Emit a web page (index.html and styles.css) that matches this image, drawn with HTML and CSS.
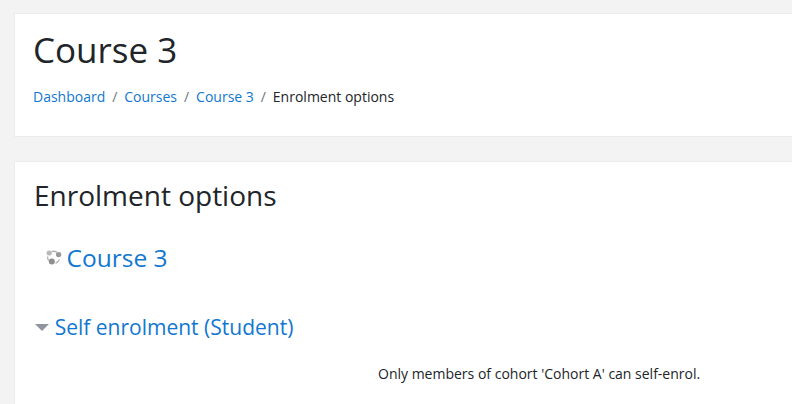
FILE: index.html
```html
<!DOCTYPE html>
<html lang="en">

<head>
    <meta charset="utf-8" />
    <title>Course 3: Enrolment options</title>
    <link rel="stylesheet" href="styles.css">
</head>

<body>
    <header class="card page-header">
        <h1>Course 3</h1>
        <nav class="breadcrumb">
            <a href="#">Dashboard</a><span class="sep">/</span>
            <a href="#">Courses</a><span class="sep">/</span>
            <a href="#">Course 3</a><span class="sep">/</span>
            <span>Enrolment options</span>
        </nav>
    </header>
    <main class="card main-card">
        <h2>Enrolment options</h2>
        <div class="course-name">
            <svg class="course-icon" width="16" height="16" viewBox="0 0 16 16">
                <path d="M5.5 1.6 A7 7 0 0 1 11 2.2 M1.6 6.5 A7 7 0 0 0 2.6 10.6 M9.6 13.4 A7 7 0 0 0 13.4 9.5" fill="none" stroke="#b0b0b0" stroke-width="1.3" />
                <circle cx="3.2" cy="3" r="2.6" fill="#b8b8b8" />
                <circle cx="12.6" cy="4.6" r="2.7" fill="#999" />
                <circle cx="5.8" cy="11.6" r="3" fill="#8e8e8e" />
            </svg>
            <a href="#">Course 3</a>
        </div>
        <div class="enrol-head">
            <span class="caret"></span>
            <a href="#">Self enrolment (Student)</a>
        </div>
        <p class="enrol-note">Only members of cohort 'Cohort A' can self-enrol.</p>
    </main>
</body>

</html>
```

FILE: styles.css
```css
body {
    margin: 0;
    height: 404px;
    padding: 13px 0 0 14px;
    background: #f3f3f3;
    font-family: "Open Sans", sans-serif;
    font-size: 14px;
    color: #212529;
    overflow: hidden;
    box-sizing: border-box;
}

a {
    color: #1177d1;
    text-decoration: none;
}

.card {
    background: #fff;
    border: 1px solid #ececec;
    border-right: 0;
}

.page-header {
    height: 124px;
    box-sizing: border-box;
    padding: 15px 18px 0;
}

h1 {
    margin: 0;
    font-size: 35px;
    font-weight: 400;
    line-height: 42px;
}

.breadcrumb {
    display: flex;
    margin-top: 16px;
    line-height: 20px;
}

.sep {
    color: #6c757d;
    margin: 0 7px 0 6.9px;
}

.main-card {
    margin-top: 24px;
    height: 243px;
    box-sizing: border-box;
    padding: 16px 18px 0 19px;
    border-bottom: 0;
}

h2 {
    margin: 0;
    font-size: 28px;
    font-weight: 400;
    line-height: 34px;
}

.course-name {
    display: flex;
    align-items: center;
    margin-top: 30px;
    padding-left: 12px;
    font-size: 24.5px;
    line-height: 32px;
}

.course-icon {
    margin-right: 4.5px;
}

.enrol-head {
    display: flex;
    align-items: center;
    margin-top: 40px;
    font-size: 21px;
    line-height: 26px;
}

.caret {
    width: 0;
    height: 0;
    border-left: 7px solid transparent;
    border-right: 7px solid transparent;
    border-top: 7px solid #8f959e;
    margin: 0 5.7px 0 1px;
}

.enrol-note {
    margin: 24px 0 0 344px;
    line-height: 20px;
}
```
